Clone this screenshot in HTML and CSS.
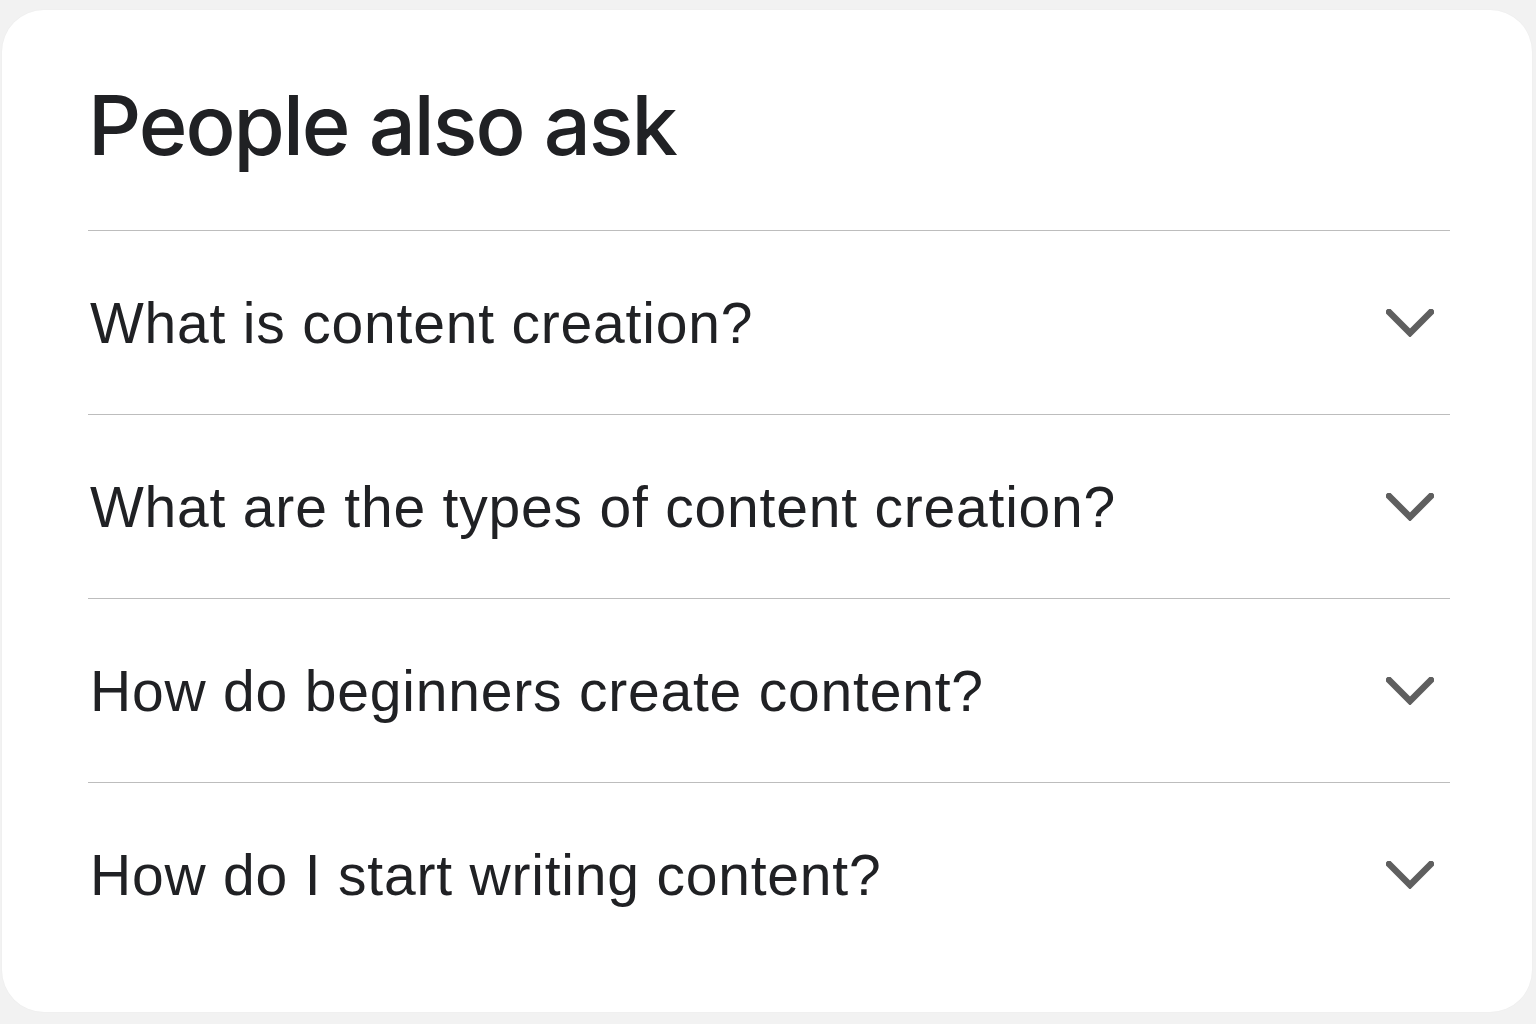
FILE: index.html
```html
<!DOCTYPE html>
<html lang="en">
<head>
<meta charset="utf-8">
<title>People also ask</title>
<link rel="stylesheet" href="styles.css">
</head>
<body>
<div class="card">
  <h1 class="title">People also ask</h1>
  <div class="list">
    <div class="row"><span class="q">What is content creation?</span><svg class="chev" viewBox="0 0 48 28"><path d="M3 3 L24 24 L45 3" fill="none" stroke="#5f5f5f" stroke-width="6.5" stroke-linecap="square"/></svg></div>
    <div class="row"><span class="q">What are the types of content creation?</span><svg class="chev" viewBox="0 0 48 28"><path d="M3 3 L24 24 L45 3" fill="none" stroke="#5f5f5f" stroke-width="6.5" stroke-linecap="square"/></svg></div>
    <div class="row"><span class="q">How do beginners create content?</span><svg class="chev" viewBox="0 0 48 28"><path d="M3 3 L24 24 L45 3" fill="none" stroke="#5f5f5f" stroke-width="6.5" stroke-linecap="square"/></svg></div>
    <div class="row"><span class="q">How do I start writing content?</span><svg class="chev" viewBox="0 0 48 28"><path d="M3 3 L24 24 L45 3" fill="none" stroke="#5f5f5f" stroke-width="6.5" stroke-linecap="square"/></svg></div>
  </div>
</div>
</body>
</html>
```
FILE: styles.css
```css
html, body {
  margin: 0;
  padding: 0;
  background: #f2f2f2;
}
body {
  width: 1536px;
  height: 1024px;
  overflow: hidden;
  padding: 10px 4px 0 2px;
  box-sizing: border-box;
}
.card {
  background: #ffffff;
  border-radius: 42px;
  height: 1002px;
  box-sizing: border-box;
  padding: 0 82px 0 86px;
  box-shadow: 0 0 2px rgba(0,0,0,0.04);
}
.title {
  margin: 0;
  padding-top: 65px;
  height: 155px;
  box-sizing: content-box;
  font-family: "Inter", sans-serif;
  font-weight: 500;
  font-size: 83px;
  line-height: 100px;
  color: #202124;
  letter-spacing: -2px;
}
.list {
  display: flex;
  flex-direction: column;
}
.row {
  display: flex;
  align-items: center;
  justify-content: space-between;
  height: 183px;
  border-top: 1px solid #bdbdbd;
  padding: 0 16px 0 2px;
}
.q {
  font-family: "Liberation Sans", Arial, sans-serif;
  font-size: 57px;
  color: #202124;
  letter-spacing: 0.8px;
}
.chev {
  width: 48px;
  height: 28px;
}
```
